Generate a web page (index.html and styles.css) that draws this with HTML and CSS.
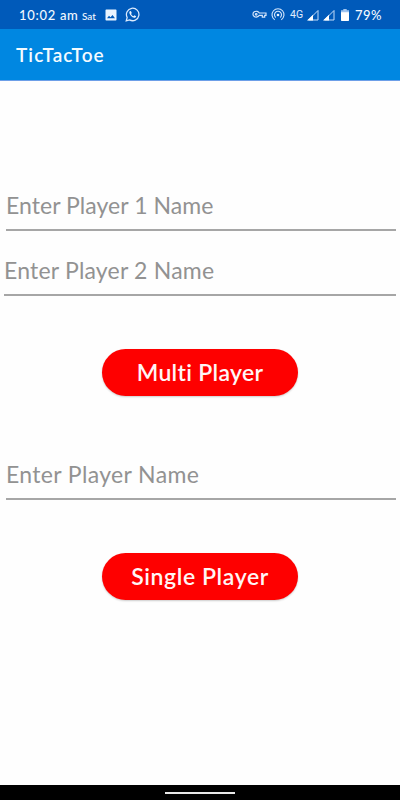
FILE: index.html
```html
<!DOCTYPE html>
<html lang="en">
<head>
<meta charset="utf-8">
<title>TicTacToe</title>
<link rel="stylesheet" href="styles.css">
</head>
<body>
<div class="status">
  <span class="time">10:02 am</span><span class="day">Sat</span>
  <svg class="photo" width="12" height="12" viewBox="0 0 12 12"><path fill="#eaf4ff" fill-rule="evenodd" d="M1.3.5h9.4q.8 0 .8.8v9.4q0 .8-.8.8H1.3q-.8 0-.8-.8V1.300q0-.8.8-.8zM2 9.300h8L7.500 6 5.500 8.300 4 6.800z"/></svg>
  <svg class="chat" width="15" height="15" viewBox="0 0 24 24"><path fill="none" stroke="#dcebff" stroke-width="2" d="M2 22l1.500-5.300A10 10 0 1 1 7.300 20.600z"/><path fill="#eaf4ff" d="M8.500 6.500c-1 .3-1.800 1.500-1.500 3 .7 3.500 4.200 7 7.800 7.700 1.500.2 3-.8 3-2.400l-2.900-1.500-1.300 1.500c-1.800-.8-3-2-3.900-3.800l1.100-1.300-1.200-3z"/></svg>
  <div class="right">
    <svg class="key" width="15" height="9" viewBox="0 0 15 9"><g fill="none" stroke="#d5e6fb" stroke-width="1.200"><path d="M7.300 3H14v2.300h-1.300v1.900h-2.400V5.300h-3A3.300 2.900 0 1 1 7.300 3z"/><circle cx="4.200" cy="4.300" r=".8"/></g></svg>
    <svg class="hotspot" width="14" height="13" viewBox="0 0 14 13"><g fill="none" stroke="#d5e6fb" stroke-width="1.100"><path d="M3.700 11.700A6 6 0 1 1 10.300 11.700"/><path d="M4.800 9.500A3.500 3.500 0 1 1 9.200 9.500"/></g><circle cx="7" cy="7" r="1.300" fill="#eaf4ff"/></svg>
    <span class="network">4G</span>
    <svg class="signal" width="12" height="12" viewBox="0 0 12 12"><path fill="none" stroke="#c4dcf8" d="M1.500 11L11 1.500V11z"/><path fill="#fff" d="M0 11.500L6 5.800v5.700z"/></svg>
    <svg class="signal second" width="12" height="12" viewBox="0 0 12 12"><path fill="none" stroke="#c4dcf8" d="M1.500 11L11 1.500V11z"/><path fill="#fff" d="M0 11.500L6 5.800v5.700z"/></svg>
    <svg class="battery" width="8" height="12" viewBox="0 0 8 12"><path fill="#9fc4f0" d="M2.300 0h3.400v1.200H8V4H0V1.200h2.300z"/><path fill="#fff" d="M0 3.300h8v8q0 .7-.7.7H.7Q0 12 0 11.300z"/></svg>
    <span class="percent">79%</span>
  </div>
</div>
<header class="bar"><h1 class="title">TicTacToe</h1></header>
<main class="content">
  <div class="field one"><span class="hint">Enter Player 1 Name</span></div>
  <div class="field two"><span class="hint">Enter Player 2 Name</span></div>
  <button class="button multi"><span>Multi Player</span></button>
  <div class="field solo"><span class="hint">Enter Player Name</span></div>
  <button class="button single"><span>Single Player</span></button>
</main>
<footer class="nav"><div class="handle"></div></footer>
</body>
</html>
```
FILE: styles.css
```css
* { box-sizing: border-box; }
body {
  margin: 0;
  width: 400px;
  height: 800px;
  display: flex;
  flex-direction: column;
  overflow: hidden;
  background: #fefefe;
  font-family: Lato, "Open Sans", sans-serif;
  white-space: nowrap;
}
svg { display: block; flex: none; }
.status {
  height: 29px;
  display: flex;
  align-items: center;
  padding: 0 18px 0 19px;
  background: #005aba;
  color: #f2f8ff;
}
.time { width: 60px; font: 500 13px/16px Lato, sans-serif; letter-spacing: 0.7px; }
.day { width: 17px; margin-left: 3px; font: 500 10px/12px Lato, sans-serif; padding-top: 2px; }
.photo { margin-left: 6px; }
.chat { margin-left: 8px; }
.right { margin-left: auto; display: flex; align-items: center; }
.hotspot { margin-left: 4px; }
.network { width: 13px; margin-left: 5px; font: 400 10.5px/14px Roboto, sans-serif; color: #e0edfd; }
.signal { margin-left: 4px; }
.battery { margin-left: 6px; }
.percent { width: 27px; margin-left: 6px; font: 500 13px/16px Lato, sans-serif; letter-spacing: 0.5px; }
.bar {
  height: 52px;
  display: flex;
  align-items: center;
  padding-left: 16px;
  background: #0087e1;
  border-bottom: 1px solid #6d9fe8;
}
.title { margin: 0; font-size: 19px; line-height: 24px; font-weight: 600; letter-spacing: 1.1px; color: #f4fbff; }
.content { flex: 1; display: flex; flex-direction: column; padding: 108px 4px 0; }
.field { height: 42px; padding-top: 2px; border-bottom: 2px solid #a6a6a6; font-size: 23px; line-height: 28px; color: #929292; }
.one { margin-left: 2px; letter-spacing: 0.05px; }
.two { margin-top: 23px; letter-spacing: 0.2px; }
.solo { margin: 62px 0 0 2px; letter-spacing: 0.35px; }
.button {
  width: 196px;
  height: 47px;
  align-self: center;
  margin: 53px 0 0;
  padding: 0 0 2px;
  border: 0;
  border-radius: 24px;
  background: #fe0000;
  color: #fff5f5;
  font: 600 23px/28px Lato, sans-serif;
  letter-spacing: 0.3px;
  box-shadow: 0 1px 2px #0003;
}
.single { letter-spacing: 0.6px; }
.nav { height: 15px; background: #000; display: flex; justify-content: center; padding-top: 7px; }
.handle { width: 70px; height: 2px; background: #e8e8e8; }
```
